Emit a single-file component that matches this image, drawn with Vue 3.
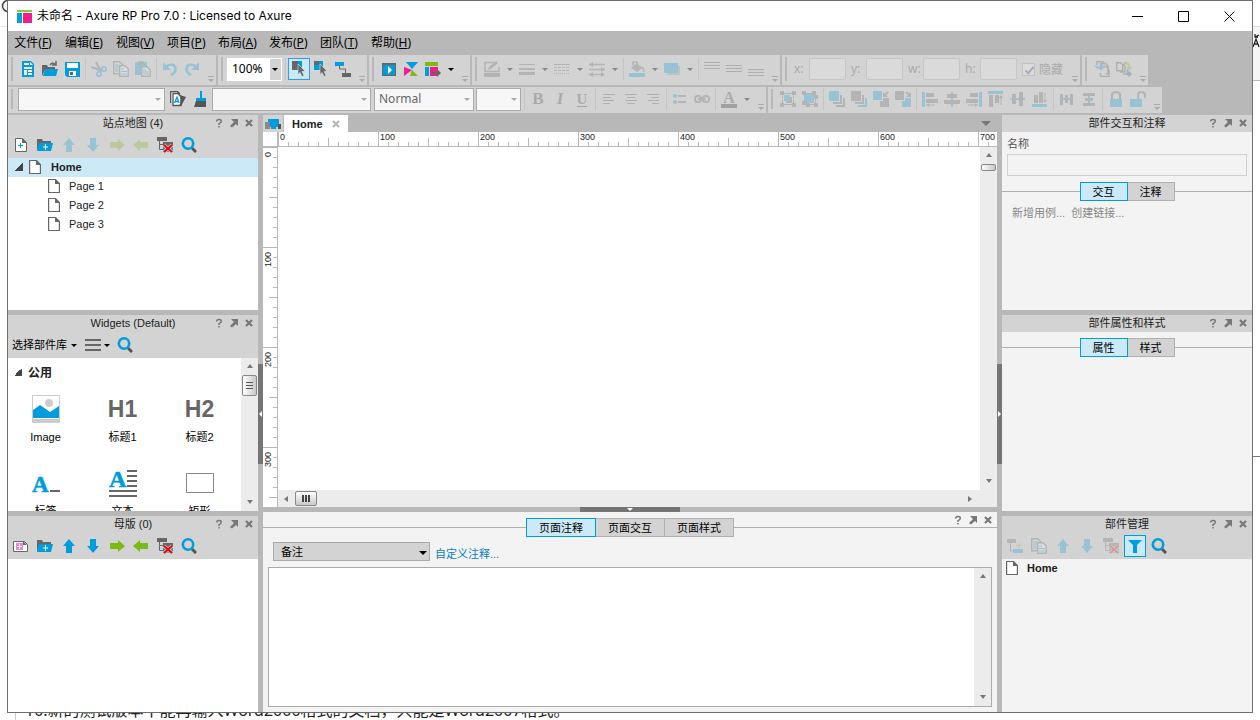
<script setup>
import { h } from 'vue'

const Ico = (p) => h('svg', { class: 'ico', viewBox: '0 0 16 16', 'aria-hidden': 'true' }, [h('use', { href: '#i-' + p.n })])
Ico.props = ['n']

const menus = [['文件', 'F'], ['编辑', 'E'], ['视图', 'V'], ['项目', 'P'], ['布局', 'A'], ['发布', 'P'], ['团队', 'T'], ['帮助', 'H']]

const fileTools = ['new', 'open', 'save', '|', '-cut', '-copy', '-paste', '|', '-undo', '-redo']
const publishTools = ['play', 'share', 'html', 'v']
const lineTools = ['-pen', '-v', '-weight', '-v', '-dash', '-v', '-ends', '-v', '|', '-fill', '-v', '-shadow', '-v', '|', '-vtop', '-vmid', '-vbot']
const masterTools = ['-import', '-export']
const textTools = ['|', '-bold', '-italic', '-underline', '|', '-left', '-center', '-right', '|', '-list', '-link', '|', '-color', '-v']
const arrangeTools = ['-group', '-ungroup', '|', '-front', '-back', '-forward', '-backward', '|', '-al', '-ac', '-ar', '-at', '-am', '-ab', '|', '-dh', '-dv', '|', '-lock', '-unlock']
const letters = { bold: 'B', italic: 'I', underline: 'U', color: 'A' }

const Tools = (p) => p.items.map((t) => {
  if (t === '|') return h('i', { class: 'sep' })
  const off = t[0] === '-'
  const n = off ? t.slice(1) : t
  const drop = n === 'v'
  return h('button', { type: 'button', class: ['tb', { off, drop }], 'aria-label': n }, [
    letters[n]
      ? h('span', { class: ['letter', n] }, letters[n])
      : h('svg', { class: 'ico', viewBox: drop ? '0 0 6 16' : '0 0 16 16' }, [h('use', { href: '#i-' + n })]),
  ])
})
Tools.props = ['items']

const siteTools = ['addpage', 'addfolder', '-up', '-down', '-next', '-prev', 'remove', 'search']
const masterPanelTools = ['addmaster', 'addfolder', 'up', 'down', 'next', 'prev', 'remove', 'search']
const managerTools = ['-addpanel', '-copy', '-up', '-down', '-remove', 'filter', 'search']

const fields = ['x', 'y', 'w', 'h']
const pages = ['Page 1', 'Page 2', 'Page 3']
const hMarks = [0, 100, 200, 300, 400, 500, 600, 700]
const vMarks = [0, 100, 200, 300]
const Caps = () => h('span', { class: 'caps' }, ['help', 'pop', 'close'].map((n) =>
  h('button', { type: 'button', 'aria-label': n }, [h('svg', { viewBox: '0 0 10 10' }, [h('use', { href: '#i-' + n })])])))
</script>

<template>
  <svg class="defs" aria-hidden="true">
    <symbol id="i-new" viewBox="0 0 16 16"><path d="M2 0h9l3 3v13H2z" fill="#009ddc"/><path d="M4 2h5v2H4zM10 1l3 3h-3zM4 6h8v2H4zM4 9h3v5H4zM8 9h4v2H8zM8 12h4v2H8z" fill="#fff"/></symbol>
    <symbol id="i-open" viewBox="0 0 16 16"><path d="M0 4h5l1 2h7v3H3l-3 6z" fill="#666"/><path d="M3 8h13l-2 7H1z" fill="#009ddc"/><path d="M8 4q2-3 5-1M14 0v4h-4" fill="none" stroke="#666" stroke-width="1.500"/></symbol>
    <symbol id="i-save" viewBox="0 0 16 16"><path d="M1 1h15v15H3l-2-2z" fill="#009ddc"/><path d="M3 2h11v5H3zM5 10h7v5H5z" fill="#fff"/><path d="M6 11h3v3H6z" fill="#666"/></symbol>
    <symbol id="i-cut" viewBox="0 0 16 16"><path d="M0 6l11 4M5 1l4 8" stroke="#666" stroke-width="2" fill="none"/><circle cx="13" cy="8" r="2.200" fill="none" stroke="#009ddc" stroke-width="1.800"/><circle cx="8" cy="13" r="2.200" fill="none" stroke="#009ddc" stroke-width="1.800"/></symbol>
    <symbol id="i-copy" viewBox="0 0 16 16"><path d="M.7 .7h6l3 3v9h-9z" fill="#ddd" stroke="#666" stroke-width="1.400"/><path d="M2 4h4M2 6h5M2 8h5M2 10h5" stroke="#009ddc"/><path d="M6.700 4.700h5l3.500 3v7.600H6.700z" fill="#f6f6f6" stroke="#666" stroke-width="1.400"/><path d="M8 8h3M8 10.500h6M8 13h6" stroke="#009ddc"/></symbol>
    <symbol id="i-paste" viewBox="0 0 16 16"><path d="M0 1h3l2-1h3l2 1h2v13H0z" fill="#009ddc"/><path d="M3 1h6v3H3z" fill="#666"/><path d="M6.700 5.700h5l3.500 3v6.600H6.700z" fill="#eee" stroke="#666" stroke-width="1.400"/><path d="M8 9h3M8 11h6M8 13h6" stroke="#009ddc"/></symbol>
    <symbol id="i-undo" viewBox="0 0 16 16"><path d="M3 6q8-5 10 0t-4 8" fill="none" stroke="#009ddc" stroke-width="2.600"/><path d="M1 1v8h8z" fill="#009ddc"/></symbol>
    <symbol id="i-redo" viewBox="0 0 16 16"><path d="M13 6q-8-5-10 0t4 8" fill="none" stroke="#009ddc" stroke-width="2.600"/><path d="M15 1v8H7z" fill="#009ddc"/></symbol>
    <symbol id="i-selA" viewBox="0 0 16 16"><path d="M1 0h8v9H1z" fill="#666"/><path d="M7 0h4v9H7z" fill="#009ddc"/><path d="M7 3l7 7-3 .500 2 4-2 1-2-4-2 2z" fill="#666" stroke="#cbe9f6" stroke-width=".6"/></symbol>
    <symbol id="i-selB" viewBox="0 0 16 16"><path d="M1 0h9v9H1z" fill="#009ddc"/><path d="M1 0h5v4H1z" fill="#666"/><path d="M3 4h3v3H3z" fill="#009ddc"/><path d="M7 3l7 7-3 .500 2 4-2 1-2-4-2 2z" fill="#666" stroke="#ddd" stroke-width=".6"/></symbol>
    <symbol id="i-conn" viewBox="0 0 16 16"><path d="M0 1h9v4H0z" fill="#009ddc"/><path d="M4.500 5v3h6v4" fill="none" stroke="#666"/><path d="M7 12h9v4H7z" fill="#666"/></symbol>
    <symbol id="i-play" viewBox="0 0 16 16"><path d="M1 2h14v13H1z" fill="#666"/><path d="M2 4h12v10H2z" fill="#009ddc"/><path d="M7 5l4 4-4 4z" fill="#fff"/></symbol>
    <symbol id="i-share" viewBox="0 0 16 16"><path d="M3 1h12l-6 7z" fill="#009ddc"/><path d="M1 6l8 3-8 6z" fill="#f01e8c"/><path d="M9 9l6 6H7z" fill="#7aba14"/></symbol>
    <symbol id="i-html" viewBox="0 0 16 16"><path d="M0 1h13v4H0z" fill="#7aba14"/><path d="M0 6h4v9H0z" fill="#009ddc"/><path d="M5 6h8v9H5z" fill="#f01e8c"/><path d="M7 11h5V8l4 4-4 4v-3H7z" fill="#666"/></symbol>
    <symbol id="i-v" viewBox="0 0 6 16"><path d="M0 7h6l-3 3z" fill="#000"/></symbol>
    <symbol id="i-pen" viewBox="0 0 16 16"><path d="M0 12h16v4H0z" fill="#666"/><path d="M10 1.500H1v9h14V6" fill="none" stroke="#666" stroke-width="1.500"/><path d="M4 9l1-3 7-6 2 2-7 6z" fill="#666"/></symbol>
    <symbol id="i-weight" viewBox="0 0 16 16"><path d="M0 3h16v1H0zM0 7h16v2H0zM0 11h16v3H0z" fill="#666"/></symbol>
    <symbol id="i-dash" viewBox="0 0 16 16"><path d="M0 3.500h16" stroke="#666"/><path d="M0 6.500h16M0 9.500h16" stroke="#666" stroke-dasharray="3 1"/><path d="M0 12.500h16" stroke="#666" stroke-dasharray="1 1"/></symbol>
    <symbol id="i-ends" viewBox="0 0 16 16"><path d="M0 3.500h16M0 8.500h16M0 13.500h14" stroke="#666" stroke-width="1.400"/><path d="M0 3.500l4-2.500v5zM16 8.500l-4-2.500v5zM0 13.500l4-2.500v5zM16 13.500l-4-2.500v5z" fill="#666"/></symbol>
    <symbol id="i-fill" viewBox="0 0 16 16"><path d="M0 12h16v4H0z" fill="#009ddc"/><path d="M2 7l6-5 5 5-5 4z" fill="#666"/><path d="M4 5V1h4v5M12 6q3 1 3 5" fill="none" stroke="#666" stroke-width="1.400"/></symbol>
    <symbol id="i-shadow" viewBox="0 0 16 16"><path d="M3 5h13v9H3z" fill="#999"/><path d="M0 2h14v10H0z" fill="#009ddc"/></symbol>
    <symbol id="i-vtop" viewBox="0 0 16 16"><path d="M0 1.500h16M0 4.500h16M0 7.500h16" stroke="#555"/></symbol>
    <symbol id="i-vmid" viewBox="0 0 16 16"><path d="M0 4.500h16M0 7.500h16M0 10.500h16" stroke="#555"/></symbol>
    <symbol id="i-vbot" viewBox="0 0 16 16"><path d="M0 8.500h16M0 11.500h16M0 14.500h16" stroke="#555"/></symbol>
    <symbol id="i-import" viewBox="0 0 16 16"><path d="M3 4V.7h6l2 2M7 4V2.700h5l2 2v8H12M8 5.500h4l3 3v7H6.500V12" fill="none" stroke="#555" stroke-width="1.400"/><path d="M0 3q1 3 6 2V2l5 4-5 4V8Q1 8 0 3z" fill="#009ddc"/></symbol>
    <symbol id="i-export" viewBox="0 0 16 16"><path d="M.7 1.700h4l2 2v6h-6zM4 11h5V5L7 3M7 13h4.500V8" fill="none" stroke="#555" stroke-width="1.400"/><path d="M8 1q6-1 6 5h2l-3 4-3-4h2q0-3-4-3z" fill="#7aba14"/><path d="M13 10l3 3-3 3-3-3z" fill="#0069aa"/></symbol>
    <symbol id="i-style" viewBox="0 0 16 16"><path d="M.7 12V.7h7L10 3M3 14V2.500h5L11 6v8.500H3z" fill="#fff" stroke="#555" stroke-width="1.300"/><path d="M10 4l6 2-5 9H9l2-5z" fill="#555"/><path d="M4.500 12l2.500-6 2 6M5 10.500h3" fill="none" stroke="#009ddc" stroke-width="1.300"/></symbol>
    <symbol id="i-brush" viewBox="0 0 16 16"><path d="M8 0h2v7h4v3H4V7h4z" fill="#009ddc"/><path d="M4 10h10v6H2z" fill="#555"/></symbol>
    <symbol id="i-left" viewBox="0 0 16 16"><path d="M2 3.500h12M2 6.500h8M2 9.500h11M2 12.500h7" stroke="#555"/></symbol>
    <symbol id="i-center" viewBox="0 0 16 16"><path d="M2 3.500h12M4 6.500h8M2 9.500h12M4 12.500h8" stroke="#555"/></symbol>
    <symbol id="i-right" viewBox="0 0 16 16"><path d="M2 3.500h12M6 6.500h8M3 9.500h11M7 12.500h7" stroke="#555"/></symbol>
    <symbol id="i-list" viewBox="0 0 16 16"><circle cx="3" cy="5" r="2" fill="#009ddc"/><circle cx="3" cy="11" r="2" fill="#009ddc"/><path d="M6 5h8M6 11h8" stroke="#666" stroke-width="2"/></symbol>
    <symbol id="i-link" viewBox="0 0 16 16"><rect x="1" y="5" width="6" height="6" rx="2.500" fill="none" stroke="#666" stroke-width="2"/><rect x="9" y="5" width="6" height="6" rx="2.500" fill="none" stroke="#666" stroke-width="2"/><path d="M4 8h8" stroke="#666" stroke-width="2"/></symbol>
    <symbol id="i-group" viewBox="0 0 16 16"><path d="M2.500 2.500h11v11h-11z" fill="none" stroke="#666"/><path d="M10 6h2v6H6v-2h4z" fill="#666"/><path d="M4 4h6v6H4z" fill="#009ddc"/><path d="M0 0h4v4H0zM12 0h4v4h-4zM0 12h4v4H0zM12 12h4v4h-4z" fill="#666"/></symbol>
    <symbol id="i-ungroup" viewBox="0 0 16 16"><path d="M2.500 2.500h9v9h-9zM5 13.500h8.500V5" fill="none" stroke="#666"/><path d="M0 0h4v4H0zM10 0h4v4h-4zM0 10h4v4H0zM12 4h4v4h-4zM12 12h4v4h-4zM4 12h4v4H4z" fill="#666"/><circle cx="7" cy="7" r="5" fill="#009ddc"/></symbol>
    <symbol id="i-front" viewBox="0 0 16 16"><path d="M0 0h10v10H0z" fill="#009ddc"/><path d="M11 4h2v9H4v-2h7zM14 7h2v9H7v-2h7z" fill="#666"/></symbol>
    <symbol id="i-back" viewBox="0 0 16 16"><path d="M0 0h10v10H0zM11 4h2v9H4v-2h7z" fill="#666"/><path d="M14 7h2v9H7v-2h7z" fill="#009ddc"/></symbol>
    <symbol id="i-forward" viewBox="0 0 16 16"><path d="M0 0h9v9H0z" fill="#009ddc"/><path d="M10 7h6v9H7v-6h3zM10 1v5h5l-2-2q2-1 3-3-3-1-4 2z" fill="#666"/></symbol>
    <symbol id="i-backward" viewBox="0 0 16 16"><path d="M0 0h9v9H0zM16 1v5h-5l2-2q-2-1-3-3 3-1 4 2z" fill="#666"/><path d="M10 7h6v9H7v-6h3z" fill="#009ddc"/></symbol>
    <symbol id="i-al" viewBox="0 0 16 16"><path d="M0 1h3v15H0z" fill="#009ddc"/><path d="M4 2h8v4H4zM4 8h12v4H4zM4 14l3-2v1.500h6v1H7V16z" fill="#666"/></symbol>
    <symbol id="i-ac" viewBox="0 0 16 16"><path d="M7 1h2v15H7z" fill="#009ddc"/><path d="M3 3h10v4H3zM0 9h16v4H0z" fill="#666"/></symbol>
    <symbol id="i-ar" viewBox="0 0 16 16"><path d="M13 1h3v15h-3z" fill="#009ddc"/><path d="M4 2h8v4H4zM0 8h12v4H0zM12 14l-3-2v1.500H2v1h7V16z" fill="#666"/></symbol>
    <symbol id="i-at" viewBox="0 0 16 16"><path d="M0 0h15v3H0z" fill="#009ddc"/><path d="M1 4h4v12H1zM7 4h4v8H7zM13 4l2 3h-1.500v7h-1V7H11z" fill="#666"/></symbol>
    <symbol id="i-am" viewBox="0 0 16 16"><path d="M0 7h15v2H0z" fill="#009ddc"/><path d="M2 3h4v10H2zM9 1h4v14H9z" fill="#666"/></symbol>
    <symbol id="i-ab" viewBox="0 0 16 16"><path d="M0 13h15v3H0z" fill="#009ddc"/><path d="M2 4h4v8H2zM7 1h4v11H7zM13 12l2-3h-1.500V2h-1v7H11z" fill="#666"/></symbol>
    <symbol id="i-dh" viewBox="0 0 16 16"><path d="M3 7h10v2H3z" fill="#009ddc"/><path d="M1 3h3v11H1zM6 4h3v8H6zM11 3h3v11h-3z" fill="#666"/></symbol>
    <symbol id="i-dv" viewBox="0 0 16 16"><path d="M7 3h2v10H7z" fill="#009ddc"/><path d="M2 2h12v3H2zM4 7h8v3H4zM2 12h12v3H2z" fill="#666"/></symbol>
    <symbol id="i-lock" viewBox="0 0 16 16"><path d="M4 8V4q0-3 4-3t4 3v4" fill="none" stroke="#666" stroke-width="2"/><path d="M2 8h12v8H2z" fill="#009ddc"/></symbol>
    <symbol id="i-unlock" viewBox="0 0 16 16"><path d="M8 8V4q0-3 3.500-3T15 4v3" fill="none" stroke="#666" stroke-width="2"/><path d="M0 8h12v8H0z" fill="#009ddc"/></symbol>
    <symbol id="i-addpage" viewBox="0 0 16 16"><path d="M2.500 1.500h7l4 4v9h-11z" fill="#fff" stroke="#666"/><path d="M9 1v5h5z" fill="#666"/><path d="M7.500 6v5M5 8.500h5" stroke="#009ddc"/></symbol>
    <symbol id="i-addfolder" viewBox="0 0 16 16"><path d="M0 2h5l1 2h8v2H3L0 14z" fill="#666"/><path d="M2 6h14l-2 8H0z" fill="#009ddc"/><path d="M8.500 7v6M6 10h5" stroke="#fff"/></symbol>
    <symbol id="i-addmaster" viewBox="0 0 16 16"><path d="M.5 3.500h11l3 3v7H.500z" fill="#fff" stroke="#666"/><path d="M3 5h7v7H3z" fill="#ef86d5"/><path d="M10 3v4h4z" fill="#666"/><path d="M6.500 6v5M4 8.500h5" stroke="#fff"/></symbol>
    <symbol id="i-up" viewBox="0 0 16 16"><path d="M8 1l6 7h-3v7H5V8H2z" fill="#009ddc"/></symbol>
    <symbol id="i-down" viewBox="0 0 16 16"><path d="M8 15l6-7h-3V1H5v7H2z" fill="#009ddc"/></symbol>
    <symbol id="i-next" viewBox="0 0 16 16"><path d="M16 8l-7-6v3H1v6h8v3z" fill="#7aba14"/></symbol>
    <symbol id="i-prev" viewBox="0 0 16 16"><path d="M0 8l7-6v3h8v6H7v3z" fill="#7aba14"/></symbol>
    <symbol id="i-remove" viewBox="0 0 16 16"><path d="M0 0h10v4H0zM6 5h10v4H6z" fill="#666"/><path d="M6 10h10v5H6z" fill="#009ddc"/><path d="M2.500 4v8.500h4M2.500 7.500h4" fill="none" stroke="#666"/><path d="M7 8l8 7M15 8l-8 7" stroke="#ccc" stroke-width="3.500"/><path d="M7 8l8 7M15 8l-8 7" stroke="#f00000" stroke-width="2"/></symbol>
    <symbol id="i-search" viewBox="0 0 16 16"><path d="M11 11l4 4" stroke="#555" stroke-width="3"/><circle cx="7" cy="6.500" r="5.200" fill="none" stroke="#009ddc" stroke-width="2.600"/></symbol>
    <symbol id="i-addpanel" viewBox="0 0 16 16"><path d="M0 1h9v4H0z" fill="#666"/><path d="M3.500 5v8h4" fill="none" stroke="#666"/><path d="M6 11h10v4H6z" fill="#009ddc"/><path d="M12 5v5M9.500 7.500h5" stroke="#7aba14"/></symbol>
    <symbol id="i-filter" viewBox="0 0 16 16"><path d="M1 2h14l-5 5v8H6V7z" fill="#009ddc"/></symbol>
    <symbol id="i-page" viewBox="0 0 12 16"><path d="M.6 1.500h7l3.800 4v9H.600z" fill="#fff" stroke="#666" stroke-width="1.200"/><path d="M7 1v5h5z" fill="#666"/></symbol>
    <symbol id="i-help" viewBox="0 0 10 10"><path d="M2.700 3.500q0-2 2.300-2t2.300 1.700Q7.300 4.500 5 5.700V7M5 8v1.500" fill="none" stroke="#777" stroke-width="1.500"/></symbol>
    <symbol id="i-pop" viewBox="0 0 10 10"><path d="M2 1h7v7L7 6 3 9.500 1 8l4-4z" fill="#777"/></symbol>
    <symbol id="i-close" viewBox="0 0 10 10"><path d="M2 2l6 6M8 2L2 8" stroke="#777" stroke-width="2.200"/></symbol>
  </svg>

  <div class="desk">
    <div class="edge left"><svg viewBox="0 0 7 30"><circle cx="8" cy="6" r="5.500" fill="none" stroke="#444" stroke-width="1.500"/><path d="M0 26.500h7" stroke="#e8e8e8"/></svg></div>
    <div class="win">
      <header class="title">
        <svg class="logo" viewBox="0 0 15 15"><path d="M0 1h15v2H0z" fill="#8cc63f"/><path d="M0 4h5v10H0z" fill="#00a0dc"/><path d="M6 4h9v10H6z" fill="#f01e8c"/></svg>
        <h1>未命名 - Axure RP Pro 7.0 : Licensed to Axure</h1>
        <button type="button" aria-label="minimize"><svg viewBox="0 0 11 11"><path d="M0 5.500h11" stroke="#000"/></svg></button>
        <button type="button" aria-label="maximize"><svg viewBox="0 0 11 11"><path d="M.5.5h10v10H.5z" fill="none" stroke="#000"/></svg></button>
        <button type="button" aria-label="close"><svg viewBox="0 0 11 11"><path d="M.5.5l10 10M10.500.5l-10 10" stroke="#000"/></svg></button>
      </header>

      <nav class="menu">
        <button v-for="m in menus" :key="m[0]" type="button">{{ m[0] }}(<u>{{ m[1] }}</u>)</button>
      </nav>

      <div class="bars one">
        <div class="bar"><i class="grip"></i><Tools :items="fileTools" /><i class="more"></i></div>
        <div class="bar">
          <i class="grip"></i>
          <span class="combo zoom"><select aria-label="zoom"><option>100%</option></select></span>
          <i class="sep"></i>
          <button type="button" class="tb on" aria-label="select intersected"><Ico n="selA" /></button>
          <button type="button" class="tb" aria-label="select contained"><Ico n="selB" /></button>
          <button type="button" class="tb" aria-label="connector"><Ico n="conn" /></button>
          <i class="more"></i>
        </div>
        <div class="bar"><i class="grip"></i><Tools :items="publishTools" /><i class="more"></i></div>
        <div class="bar"><i class="grip"></i><Tools :items="lineTools" /><i class="more"></i></div>
        <div class="bar">
          <i class="grip"></i>
          <label v-for="f in fields" :key="f" class="field"><span>{{ f }}:</span><input type="text" disabled></label>
          <label class="check"><input type="checkbox" checked disabled>隐藏</label>
          <i class="more"></i>
        </div>
        <div class="bar"><i class="grip"></i><Tools :items="masterTools" /><i class="more"></i></div>
      </div>

      <div class="bars two">
        <div class="bar">
          <i class="grip"></i>
          <span class="combo style"><select aria-label="style" disabled><option></option></select></span>
          <button type="button" class="tb" aria-label="style editor"><Ico n="style" /></button>
          <button type="button" class="tb" aria-label="format painter"><Ico n="brush" /></button>
          <span class="combo font"><select aria-label="font" disabled><option></option></select></span>
          <span class="combo face"><select aria-label="typeface" disabled><option>Normal</option></select></span>
          <span class="combo size"><select aria-label="size" disabled><option></option></select></span>
          <Tools :items="textTools" />
          <i class="more"></i>
        </div>
        <div class="bar"><i class="grip"></i><Tools :items="arrangeTools" /><i class="more"></i></div>
      </div>

      <main class="work">
        <div class="col">
          <section class="panel">
            <header class="cap"><h2>站点地图 (4)</h2><Caps /></header>
            <div class="ptools"><Tools :items="siteTools" /></div>
            <div class="body white">
              <div class="node root"><i class="tri"></i><svg class="pg"><use href="#i-page" /></svg><b>Home</b></div>
              <div v-for="p in pages" :key="p" class="node kid"><svg class="pg"><use href="#i-page" /></svg><span>{{ p }}</span></div>
            </div>
          </section>
          <section class="panel">
            <header class="cap"><h2>Widgets (Default)</h2><Caps /></header>
            <div class="ptools lib">
              <button type="button" class="lbl">选择部件库<i class="dn"></i></button>
              <button type="button" class="lbl" aria-label="library menu"><i class="burger"></i><i class="dn"></i></button>
              <button type="button" class="tb" aria-label="search"><Ico n="search" /></button>
            </div>
            <div class="body white split">
              <div class="widgets">
                <h3><i class="tri"></i>公用</h3>
                <div class="grid">
                  <figure><svg viewBox="0 0 28 28"><path d="M.5.5h27v27H.5z" fill="#fff" stroke="#ccc"/><path d="M0 24h28v4H0z" fill="#ccc"/><circle cx="17" cy="8" r="4" fill="#ccc"/><path d="M1 15l7-5 10 7 9-6v12H1z" fill="#009ddc"/></svg><figcaption>Image</figcaption></figure>
                  <figure><strong>H1</strong><figcaption>标题1</figcaption></figure>
                  <figure><strong>H2</strong><figcaption>标题2</figcaption></figure>
                  <figure><svg viewBox="0 0 28 28"><text x="0" y="23" font-family="Liberation Serif" font-size="23" font-weight="700" fill="#009ddc" stroke="#009ddc" stroke-width=".6">A</text><path d="M18 22h10" stroke="#666" stroke-width="2"/></svg><figcaption>标签</figcaption></figure>
                  <figure><svg viewBox="0 0 28 28"><text x="0" y="18" font-family="Liberation Serif" font-size="24" font-weight="700" fill="#009ddc" stroke="#009ddc" stroke-width=".6">A</text><path d="M18 2h10M18 7h10M18 12h10M18 17h10M0 22h28M0 27h28" stroke="#666" stroke-width="2"/></svg><figcaption>文本</figcaption></figure>
                  <figure><svg viewBox="0 0 28 28"><path d="M.5 4.500h27v19H.5z" fill="#fff" stroke="#888"/></svg><figcaption>矩形</figcaption></figure>
                </div>
              </div>
              <div class="vbar"><i class="ar up"></i><i class="thumb lines"></i><i class="ar down"></i></div>
            </div>
          </section>
          <section class="panel">
            <header class="cap"><h2>母版 (0)</h2><Caps /></header>
            <div class="ptools"><Tools :items="masterPanelTools" /></div>
            <div class="body white"></div>
          </section>
        </div>

        <div class="vsplit"><i class="grab toleft"></i></div>

        <div class="mid">
          <div class="tabs">
            <button type="button" class="views" aria-label="adaptive views"><svg viewBox="0 0 16 12"><path d="M3 1h11v8H3zM6 9h5v2H6z" fill="#009ddc"/><path d="M0 4h5v7H0z" fill="#888"/><path d="M13 6h3v5h-3z" fill="#555"/></svg></button>
            <div class="tab"><b>Home</b><button type="button" aria-label="close tab"><svg viewBox="0 0 10 10"><path d="M2 2l6 6M8 2L2 8" stroke="#b8b8b8" stroke-width="2.200"/></svg></button></div>
            <button type="button" class="all" aria-label="tab list"></button>
          </div>
          <div class="rulerrow">
            <i class="corner"></i>
            <div class="hruler"><span v-for="m in hMarks" :key="m">{{ m }}</span></div>
          </div>
          <div class="stage">
            <div class="vruler"><div v-for="m in vMarks" :key="m"><span>{{ m }}</span></div></div>
            <div class="canvaswrap">
              <div class="canvasrow"><div class="canvas"></div><div class="vbar"><i class="ar up"></i><i class="thumb tiny"></i><i class="ar down"></i></div></div>
              <div class="hbar"><i class="ar lf"></i><i class="thumb wide"></i><i class="ar rt"></i></div>
            </div>
          </div>
          <div class="hsplit"><i class="grab todown"></i></div>
          <section class="notes">
            <Caps />
            <div class="seg"><button type="button" class="on">页面注释</button><button type="button">页面交互</button><button type="button">页面样式</button></div>
            <div class="noterow"><span class="combo note"><select aria-label="note field"><option>备注</option></select></span><a href="#">自定义注释...</a></div>
            <div class="area"><textarea aria-label="notes"></textarea><div class="vbar"><i class="ar up"></i><i class="ar down"></i></div></div>
          </section>
        </div>

        <div class="vsplit"><i class="grab toright"></i></div>

        <div class="col">
          <section class="panel">
            <header class="cap"><h2>部件交互和注释</h2><Caps /></header>
            <div class="body">
              <label class="name">名称<input type="text"></label>
              <div class="seg"><button type="button" class="on">交互</button><button type="button">注释</button></div>
              <p class="links"><a href="#">新增用例...</a><a href="#">创建链接...</a></p>
            </div>
          </section>
          <section class="panel">
            <header class="cap"><h2>部件属性和样式</h2><Caps /></header>
            <div class="body"><div class="seg"><button type="button" class="on">属性</button><button type="button">样式</button></div></div>
          </section>
          <section class="panel">
            <header class="cap"><h2>部件管理</h2><Caps /></header>
            <div class="ptools mgr"><Tools :items="managerTools" /></div>
            <div class="body"><div class="node flat"><svg class="pg"><use href="#i-page" /></svg><b>Home</b></div></div>
          </section>
        </div>
      </main>
    </div>
    <div class="edge right"><svg viewBox="0 0 7 100"><path d="M0 26h7v54H0z" fill="#f5f5f5"/><path d="M0 26.500h7" stroke="#ddd"/><path d="M0 80.500h7" stroke="#bbb"/><path d="M0 47l3-8 3 8M1 44h4M2 37l4-2M2 34v3h3" fill="none" stroke="#222" stroke-width="1.300"/></svg><i class="rule"></i></div>
    <p class="backtext">10.新的测试版本不能再输入Word2000格式的文档，只能是Word2007格式。</p>
  </div>
</template>

<style>
body { margin: 0; overflow: hidden; background: #fff; }
</style>

<style scoped>
* { box-sizing: border-box; }
.desk { display: grid; grid-template: minmax(0, 1fr) 7px / 7px minmax(0, 1fr) 7px; height: 100vh; font: 11px/16px "Liberation Sans", "Noto Sans CJK SC", sans-serif; color: #000; }
.desk :deep(button), .desk :deep(select), .desk :deep(input) { font: inherit; color: inherit; margin: 0; padding: 0; border: 0; background: none; border-radius: 0; }
.desk :deep(svg) { display: block; }
.defs { position: absolute; width: 0; height: 0; }
h1, h2, h3, p, figure { margin: 0; font: inherit; }
i { flex: none; }
.edge svg { width: 7px; }
.right { display: flex; flex-direction: column; gap: 356px; }
.rule { height: 1px; background: #777; }
.backtext { grid-column: 1 / 4; margin-left: 15px; border-left: 1px solid #ccc; padding-left: 9px; display: flex; align-items: flex-end; overflow: hidden; font: 16px/20px "Noto Sans", "Noto Sans CJK SC", sans-serif; white-space: nowrap; color: #222; }
.win { display: flex; flex-direction: column; min-width: 0; min-height: 0; border: 1px solid #6e6e6e; background: #b8b8b8; }

.title { display: flex; align-items: center; height: 30px; flex: none; background: #fff; padding-left: 9px; font: 12px/16px Inter, "Noto Sans CJK SC", sans-serif; }
.logo { width: 15px; height: 15px; margin-right: 5px; }
.title h1 { flex: 1; }
.title button { width: 46px; height: 28px; display: grid; place-items: center; }
.title button svg { width: 11px; height: 11px; }

.menu { display: flex; gap: 13px; height: 24px; flex: none; padding-left: 6px; align-items: center; font: 12px/16px "Noto Sans", "Noto Sans CJK SC", sans-serif; }
.menu button { width: 38px; white-space: nowrap; }

.bars { display: flex; gap: 2px; flex: none; overflow: hidden; }
.one { height: 30px; }
.two { height: 26px; margin: 2px 0; }
.bar { display: flex; align-items: center; flex: none; padding-bottom: 2px; background: #d3d3d3; }
.grip { width: 2px; height: 24px; margin: 0 4px 0 3px; background: #b8b8b8; }
.two .grip { height: 20px; }
.desk :deep(.sep) { flex: none; width: 5px; height: 22px; background: linear-gradient(#c4c4c4, #c4c4c4) center / 1px 100% no-repeat; }
.more { position: relative; align-self: flex-end; width: 13px; height: 9px; }
.more::before { content: ""; position: absolute; left: 5px; top: 2px; width: 6px; height: 1px; background: #aaa; }
.more::after { content: ""; position: absolute; left: 5px; top: 5px; border: 3px solid transparent; border-top-color: #aaa; border-bottom: 0; }
.desk :deep(.tb) { flex: none; width: 22px; height: 22px; display: grid; place-items: center; }
.desk :deep(.tb.drop) { width: 13px; }
.desk :deep(.tb.off) { opacity: .28; }
.desk :deep(.tb.off.drop) { opacity: .35; }
.desk :deep(.ico) { width: 16px; height: 16px; }
.desk :deep(.drop .ico) { width: 6px; }
.desk .tb.on { border: 1px solid #3399ff; background: #cbe9f6; }
.desk :deep(.letter) { font: 700 17px/18px "Liberation Serif", serif; color: #444; }
.desk :deep(.letter.italic) { font-style: italic; }
.desk :deep(.letter.underline) { font-size: 15px; line-height: 14px; border-bottom: 1px solid #333; }
.desk :deep(.letter.color) { width: 16px; line-height: 13px; font-size: 16px; text-align: center; border-bottom: 4px solid #222; }

.combo { position: relative; flex: none; display: block; height: 23px; border: 1px solid #aaa; background: #f7f7f7; font: 12px/16px "Noto Sans", sans-serif; }
.combo select { appearance: none; display: block; width: 100%; height: 100%; opacity: 1; }
.combo::after { content: ""; position: absolute; right: 3px; top: 9px; border: 3px solid transparent; border-top: 3px solid #aaa; border-bottom: 0; pointer-events: none; }
.combo.zoom { width: 55px; margin-right: 1px; border-color: #fff; background: linear-gradient(90deg, #fff 42px, #d3d3d3 42px); }
.desk .combo.zoom select { padding-left: 4px; }
.zoom::after, .combo.note::after { border-top-color: #000; }
.combo.style { width: 147px; margin: 0 2px 0 1px; }
.combo.font { width: 159px; margin: 0 3px 0 1px; }
.combo.face { width: 100px; margin-right: 2px; color: #666; }
.desk .combo.face select { padding-left: 4px; }
.combo.size { width: 45px; margin-right: 1px; }

.field { display: flex; align-items: center; font: 12px/16px "Noto Sans", sans-serif; color: #aaa; }
.field span { width: 18px; padding-left: 3px; }
.desk .field input { width: 37px; height: 22px; margin-right: 2px; border: 1px solid #c6c6c6; border-radius: 2px; background: #dadada; }
.check { display: flex; align-items: center; gap: 4px; margin: 0 4px 0 3px; font: 12px/16px "Noto Sans CJK SC", sans-serif; color: #aaa; }
.desk .check input { appearance: none; position: relative; width: 13px; height: 13px; border: 1px solid #c0c0c0; background: #dcdcdc; }
.check input::after { content: ""; position: absolute; left: 4px; top: 1px; width: 3px; height: 7px; border: solid #aab; border-width: 0 2px 2px 0; transform: rotate(40deg); }

.work { flex: 1; min-height: 0; display: grid; grid-template-columns: 250px 5px minmax(0, 1fr) 5px 250px; }
.col { display: grid; grid-template-rows: minmax(0, 195fr) minmax(0, 196fr) minmax(0, 196fr); gap: 5px; min-height: 0; }
.panel { min-height: 0; display: flex; flex-direction: column; background: #f3f3f3; }
.cap { position: relative; flex: none; height: 17px; display: flex; justify-content: center; background: #d3d3d3; color: #222; }
.desk :deep(.caps) { position: absolute; right: 4px; top: 3px; display: flex; gap: 5px; }
.desk :deep(.caps button), .desk :deep(.caps svg) { width: 10px; height: 10px; }
.ptools { flex: none; height: 26px; display: flex; align-items: center; padding-left: 2px; gap: 2px; background: #d3d3d3; }
.mgr :deep(.tb:nth-child(6)) { border: 1px solid #009ddc; background: #cbe9f6; }
.body { flex: 1; min-height: 0; overflow: hidden; }
.white { background: #fff; }
.node { display: flex; align-items: center; height: 19px; gap: 9px; padding-bottom: 2px; color: #222; }
.node.root { background: #cbe9f6; padding-left: 7px; gap: 10px; }
.node.root .tri { margin-right: -4px; }
.node.kid { padding-left: 40px; }
.node.flat { padding-left: 4px; }
.pg { width: 12px; height: 16px; }
.tri { width: 8px; height: 8px; background: linear-gradient(135deg, transparent 50%, #444 50%); }
.lib { gap: 0; padding-left: 4px; }
.desk .lbl { display: flex; align-items: center; margin-right: 8px; }
.dn { border: 3px solid transparent; border-top-color: #000; border-bottom: 0; margin-left: 4px; }
.burger { width: 16px; height: 12px; background: repeating-linear-gradient(#666 0 2px, transparent 2px 5px); }
.lbl .burger + .dn { margin-left: 3px; }
.desk .lib .tb { margin-left: -4px; }
.split { display: flex; }
.widgets { flex: 1; min-width: 0; overflow: hidden; }
.widgets h3 { display: flex; align-items: center; gap: 6px; height: 27px; padding-left: 6px; font: 700 12px/16px "Noto Sans CJK SC", sans-serif; color: #222; }
.grid { display: grid; grid-template-columns: repeat(3, 77px); padding-top: 10px; margin-left: -1px; }
figure { display: flex; flex-direction: column; align-items: center; height: 74px; }
figure svg, figure strong { width: 28px; height: 28px; margin-bottom: 6px; display: flex; justify-content: center; }
figure strong { font-size: 23px; line-height: 28px; color: #666; }

.vbar { flex: none; width: 17px; display: flex; flex-direction: column; align-items: center; background: #ececec; }
.hbar { flex: none; height: 17px; display: flex; align-items: center; background: #ececec; }
.ar { width: 0; height: 0; border: 3px solid transparent; }
.up { border-top: 0; border-bottom: 4px solid #777; margin: 6px 0 7px; }
.down { border-bottom: 0; border-top: 4px solid #777; margin: auto 0 7px; }
.lf { border-left: 0; border-right: 4px solid #777; margin: 0 7px 0 6px; }
.rt { border-right: 0; border-left: 4px solid #777; margin: 0 25px 0 auto; }
.thumb { border: 1px solid #888; border-radius: 2px; background: linear-gradient(90deg, #fff, #c8c8c8); }
.lines { width: 15px; height: 21px; display: grid; place-items: center; }
.lines::before { content: ""; width: 7px; height: 8px; background: repeating-linear-gradient(#555 0 1px, transparent 1px 3px); }
.tiny { width: 15px; height: 7px; }
.wide { width: 22px; height: 15px; display: grid; place-items: center; background: linear-gradient(#fff, #c8c8c8); }
.wide::before { content: ""; width: 8px; height: 7px; background: repeating-linear-gradient(90deg, #444 0 2px, transparent 2px 3px); }

.vsplit, .hsplit { display: flex; align-items: center; justify-content: center; background: #b8b8b8; }
.hsplit { flex: none; height: 5px; }
.grab { display: grid; place-items: center; width: 5px; height: 100px; background: #757575; }
.grab.todown { width: 100px; height: 5px; }
.grab::before { content: ""; border: 3px solid transparent; }
.toleft::before { border-left: 0; border-right-color: #fff; }
.toright::before { border-right: 0; border-left-color: #fff; }
.todown::before { border-bottom: 0; border-top-color: #fff; }

.mid { display: flex; flex-direction: column; min-width: 0; min-height: 0; }
.tabs { flex: none; height: 17px; display: flex; align-items: stretch; }
.views { width: 21px; display: grid; place-items: center; }
.desk .views { background: #d3d3d3; border-right: 1px solid #b8b8b8; }
.views svg { width: 16px; height: 12px; }
.tab { display: flex; align-items: center; gap: 8px; padding: 0 7px 0 8px; background: #fff; color: #222; }
.tab svg { width: 10px; height: 10px; }
.desk .all { align-self: center; width: 0; height: 0; border: 5px solid transparent; border-top-color: #777; border-bottom: 0; margin: 0 6px 0 auto; }
.rulerrow { flex: none; display: flex; height: 15px; background: #fff; }
.corner { width: 15px; border: solid #b8b8b8; border-width: 0 1px 1px 0; }
.hruler { flex: 1; min-width: 0; display: flex; overflow: hidden; border-bottom: 1px solid #b8b8b8; background: linear-gradient(90deg, #b8b8b8 1px, transparent 1px) 0 0 / 100px 14px repeat-x, linear-gradient(90deg, #b8b8b8 1px, transparent 1px) 0 100% / 50px 8px repeat-x, linear-gradient(90deg, #b8b8b8 1px, transparent 1px) 0 100% / 10px 4px repeat-x; }
.hruler span { flex: none; width: 100px; padding-left: 2px; font-size: 9px; line-height: 11px; color: #222; }
.stage { flex: 1; min-height: 0; display: flex; background: #fff; }
.vruler { flex: none; width: 15px; overflow: hidden; border-right: 1px solid #b8b8b8; background: linear-gradient(#b8b8b8 1px, transparent 1px) 0 0 / 14px 100px repeat-y, linear-gradient(#b8b8b8 1px, transparent 1px) 100% 0 / 8px 50px repeat-y, linear-gradient(#b8b8b8 1px, transparent 1px) 100% 0 / 4px 10px repeat-y; }
.vruler div { height: 100px; padding-top: 5px; }
.vruler span { display: block; width: 11px; writing-mode: vertical-rl; transform: rotate(180deg); font-size: 9px; line-height: 11px; color: #222; }
.canvaswrap { flex: 1; min-width: 0; display: flex; flex-direction: column; }
.canvasrow { flex: 1; min-height: 0; display: flex; }
.canvas { flex: 1; background: #fff; }
.notes { position: relative; flex: none; height: 200px; display: flex; flex-direction: column; background: #f3f3f3; }
.seg { display: flex; justify-content: center; margin-top: 6px; flex: none; background: linear-gradient(#b0b0b0, #b0b0b0) 0 9px / 100% 1px no-repeat; }
.desk .seg button { height: 19px; padding: 0 12px; border: 1px solid #b0b0b0; border-left: 0; background: #d3d3d3; }
.desk .seg button.on { border: 1px solid #009ddc; background: #cbe9f6; }
.noterow { display: flex; gap: 5px; padding: 5px 10px 0; }
.combo.note { width: 157px; height: 19px; background: #d3d3d3; font: inherit; }
.desk .combo.note select { padding-left: 7px; }
.combo.note::after { border-width: 4px 4px 0; top: 8px; right: 2px; }
.noterow a { color: #0a7fc0; text-decoration: none; padding-top: 4px; }
.area { flex: 1; display: flex; margin: 5px; border: 1px solid #aaa; background: #fff; min-height: 0; }
.area textarea { flex: 1; border: 0; resize: none; outline: 0; background: #fff; }
.name { display: block; padding: 4px 5px 0; color: #555; }
.desk .name input { display: block; width: 100%; height: 22px; margin-top: 2px; border: 1px solid #d0d0d0; }
.links { display: flex; gap: 6px; padding: 4px 10px; }
.links a { color: #888; text-decoration: none; }
</style>
